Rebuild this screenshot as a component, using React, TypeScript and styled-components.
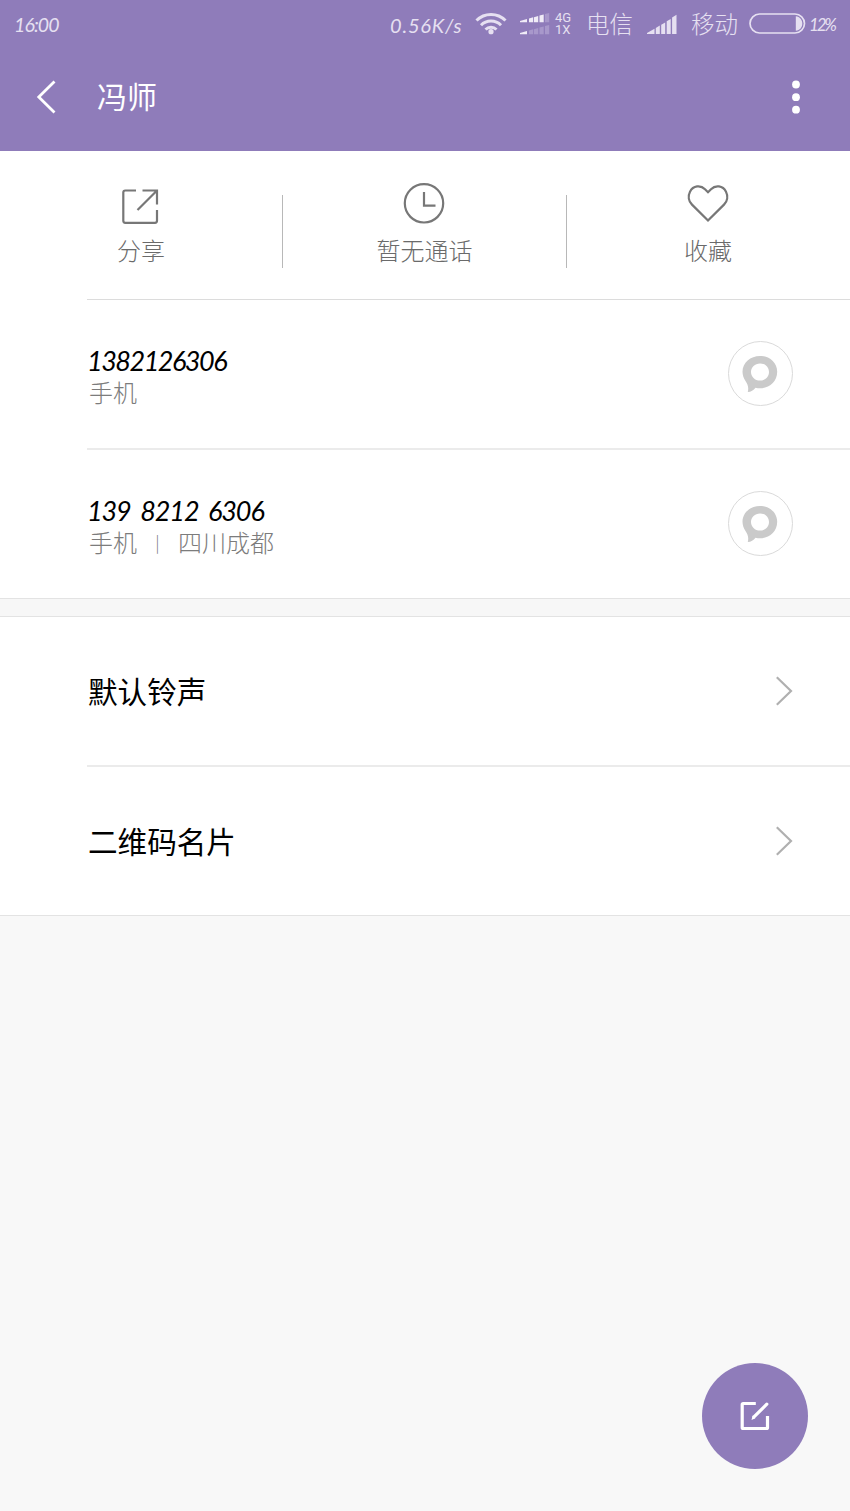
import React from 'react';
import styled, { createGlobalStyle } from 'styled-components';

const PURPLE = '#8f7cba';
const STATUS = '#e6e0f1';

const GlobalStyle = createGlobalStyle`
  * { box-sizing: border-box; }
  body {
    margin: 0;
    background: #f8f8f8;
    font-family: Lato, "Noto Sans CJK SC", sans-serif;
  }
  svg { display: block; flex: none; }
`;

const Screen = styled.div`
  position: relative;
  width: 850px;
  height: 1511px;
  overflow: hidden;
  background: #f8f8f8;
`;

const Header = styled.header`
  height: 151px;
  background: ${PURPLE};
`;

const StatusBar = styled.div`
  display: flex;
  align-items: center;
  height: 48px;
  padding: 0 0 0 14px;
  color: ${STATUS};
`;

const StatusText = styled.span<{ $w: number; $size?: number; $spacing?: number; $ml?: number }>`
  flex: none;
  width: ${(p) => p.$w}px;
  margin-left: ${(p) => p.$ml ?? 0}px;
  font-size: ${(p) => p.$size ?? 20}px;
  letter-spacing: ${(p) => p.$spacing ?? 0}px;
  font-style: italic;
  line-height: 24px;
  padding-top: 2px;
  white-space: nowrap;
`;

const Carrier = styled.span<{ $ml: number }>`
  flex: none;
  width: 47px;
  margin-left: ${(p) => p.$ml}px;
  font-family: "Noto Sans CJK SC", sans-serif;
  font-size: 23.5px;
  font-weight: 300;
  line-height: 30px;
  padding-bottom: 2px;
  white-space: nowrap;
`;

const StatusIcon = styled.svg<{ $ml: number }>`
  margin-left: ${(p) => p.$ml}px;
`;

const NetType = styled.span`
  display: flex;
  flex-direction: column;
  flex: none;
  width: 18px;
  margin-left: 5px;
  font-family: Roboto, sans-serif;
  font-size: 13px;
  line-height: 12px;
`;

const TitleBar = styled.div`
  display: flex;
  align-items: center;
  height: 98px;
  padding: 0 48px 0 36px;
`;

const Title = styled.h1`
  flex: 1;
  margin: 0 0 0 41px;
  padding-bottom: 4px;
  color: #fff;
  font-family: "Noto Sans CJK SC", sans-serif;
  font-size: 30px;
  font-weight: 400;
  line-height: 40px;
`;

const Card = styled.section`
  background: #fff;
  border-bottom: 1px solid #e3e3e3;
`;

const Actions = styled.div`
  display: flex;
  height: 149px;
  position: relative;

  &::after {
    content: '';
    position: absolute;
    right: 0;
    bottom: 0;
    left: 87px;
    height: 1px;
    background: #dcdcdc;
  }
`;

const Action = styled.div<{ $w: number }>`
  display: flex;
  flex: none;
  flex-direction: column;
  align-items: center;
  width: ${(p) => p.$w}px;
  padding-top: 30px;
  color: #6a6a6a;

  svg { margin-right: 1px; }
`;

const ActionLabel = styled.span`
  margin-top: 9px;
  font-family: "Noto Sans CJK SC", sans-serif;
  font-size: 24px;
  font-weight: 300;
  line-height: 32px;
`;

const Divider = styled.div`
  width: 1px;
  height: 73px;
  margin-top: 44px;
  background: #b8b8b8;
`;

const Row = styled.div<{ $line?: boolean; $h: number }>`
  display: flex;
  align-items: center;
  justify-content: space-between;
  height: ${(p) => p.$h}px;
  margin-left: 87px;
  padding-right: 57px;
  border-bottom: ${(p) => (p.$line ? '2px solid #ebebeb' : 'none')};
`;

const Entry = styled.div`
  display: flex;
  flex-direction: column;
  padding-top: 4px;
`;

const Phone = styled.span<{ $grouped?: boolean }>`
  color: #000;
  font-size: 27px;
  font-style: italic;
  letter-spacing: ${(p) => (p.$grouped ? -1.1 : -1.5)}px;
  line-height: 32px;
  word-spacing: ${(p) => (p.$grouped ? 4.3 : 0)}px;
`;

const Detail = styled.span`
  display: flex;
  margin-left: 2px;
  color: #7c7c7c;
  font-family: "Noto Sans CJK SC", sans-serif;
  font-size: 24px;
  font-weight: 300;
  line-height: 30px;
`;

const Bar = styled.span`
  width: 41px;
  font-size: 17px;
  text-align: center;
`;

const Message = styled.div`
  display: flex;
  align-items: center;
  justify-content: center;
  width: 65px;
  height: 65px;
  margin-bottom: 1px;
  border: 1px solid #dadada;
  border-radius: 50%;

  svg { margin-right: 1px; }
`;

const Setting = styled.span`
  margin-left: 1px;
  color: #000;
  font-family: "Noto Sans CJK SC", sans-serif;
  font-size: 29.6px;
  line-height: 40px;
`;

const Gap = styled.div`
  height: 18px;
  border-bottom: 1px solid #e3e3e3;
  background: #f7f7f7;
`;

const EditButton = styled.div`
  position: absolute;
  top: 1363px;
  left: 702px;
  display: flex;
  align-items: center;
  justify-content: center;
  width: 106px;
  height: 106px;
  border-radius: 50%;
  background: ${PURPLE};
`;

const WifiIcon = () => (
  <StatusIcon $ml={13} width="32" height="24" viewBox="0 0 32 24" fill="none" stroke={STATUS} strokeWidth="3">
    <path d="M1.500 8.500a20.500 20.500 0 0 1 29 0M6 13.300a14 14 0 0 1 20 0M10.500 17.500a8 8 0 0 1 11 0" />
    <circle cx="16" cy="19.700" r="2.600" fill={STATUS} stroke="none" />
  </StatusIcon>
);

const barX = [0, 9, 14, 19.5, 25];

const SmallSignal = ({ base, rise, on }: { base: number; rise: number; on: number }) => (
  <>
    {barX.map((x, i) => {
      const w = i === 0 ? 7 : 4.2;
      const top = (px: number) => base - 1.2 - (px / 29) * rise;
      return (
        <path
          key={x}
          fill={i < on ? '#f0ecf7' : '#a898cb'}
          d={`M${x} ${base}V${top(x)}L${x + w} ${top(x + w)}V${base}z`}
        />
      );
    })}
  </>
);

const DualSignal = () => (
  <StatusIcon $ml={13} width="30" height="24" viewBox="0 0 30 24">
    <SmallSignal base={10.2} rise={8} on={4} />
    <SmallSignal base={22.2} rise={8} on={1} />
  </StatusIcon>
);

const FullSignal = () => (
  <StatusIcon $ml={14} width="30" height="20" viewBox="0 0 30 20" fill={STATUS}>
    <path d="M0 20v-1l7.500-4.200v5.200zM8.800 20v-6l4-2.400V20zM14.200 20v-9.200l4-2.400V20zM19.700 20V7.300l4-2.400V20zM25.100 20V3.600L29.500 .8V20z" />
  </StatusIcon>
);

const Battery = () => (
  <StatusIcon $ml={11} width="58" height="22" viewBox="0 0 58 22">
    <rect x="1" y="1" width="54.500" height="19" rx="9.500" fill="none" stroke={STATUS} strokeWidth="1.700" />
    <path d="M46.800 3.200c4 .5 6.500 3.500 6.500 7.300s-2.500 6.800-6.500 7.300z" fill={STATUS} />
  </StatusIcon>
);

const BackIcon = () => (
  <svg width="20" height="34" viewBox="0 0 20 34" fill="none" stroke="#fff" strokeWidth="2.800">
    <path d="M18.500 1.500L2.800 17l15.700 15.500" />
  </svg>
);

const MoreIcon = () => (
  <svg width="12" height="34" viewBox="0 0 12 34" fill="#fff">
    <circle cx="6" cy="4.500" r="3.900" />
    <circle cx="6" cy="17.200" r="3.900" />
    <circle cx="6" cy="29.700" r="3.900" />
  </svg>
);

const ShareIcon = () => (
  <svg width="44" height="44" viewBox="0 0 44 44" fill="none" stroke="#777" strokeWidth="2.200">
    <path d="M17 9.500H6.300a2 2 0 0 0-2 2V39.800a2 2 0 0 0 2 2h29.700a2 2 0 0 0 2-2V29M23.500 9.500h14.500V23.500M37.500 10L18.500 29" />
  </svg>
);

const ClockIcon = () => (
  <svg width="44" height="44" viewBox="0 0 44 44" fill="none" stroke="#777" strokeWidth="2.200">
    <circle cx="22" cy="22.300" r="19.200" />
    <path d="M22 11v13.700h11.500" />
  </svg>
);

const HeartIcon = () => (
  <svg width="44" height="44" viewBox="0 0 44 44" fill="none" stroke="#777" strokeWidth="2.200">
    <path d="M22 39.500L6 23.600C2.500 20.200 1.800 15 4 10.700C7.200 4.500 14.500 3.700 19 8.200L22 11.200L25 8.200C29.500 3.700 36.800 4.500 40 10.700C42.200 15 41.500 20.200 38 23.600Z" />
  </svg>
);

const BubbleIcon = () => (
  <svg width="36" height="38" viewBox="0 0 36 38" fill="#cacaca">
    <path
      fillRule="evenodd"
      d="M18 1C27.500 1 35.200 7.500 35.200 16.800C35.200 26.500 27.500 33.300 18 33.300C16.500 33.300 15 33 13.500 32.700C11.500 35.500 9 36.800 5.800 37C6.800 33 6 29.500 3.500 26C1.500 23 .5 20 .5 16.800C.5 7.500 8.500 1 18 1ZM18 8.400C12.900 8.400 9 12.200 9 17C9 21.800 12.900 25.600 18 25.600C23.100 25.600 27 21.800 27 17C27 12.200 23.100 8.400 18 8.400Z"
    />
  </svg>
);

const ChevronIcon = () => (
  <svg width="18" height="30" viewBox="0 0 18 30" fill="none" stroke="#b0b0b0" strokeWidth="2.200">
    <path d="M1.800 1.300L16 15L1.800 28.700" />
  </svg>
);

const EditIcon = () => (
  <svg width="30" height="30" viewBox="0 0 30 30" fill="none" stroke="#fff" strokeWidth="3.200">
    <path d="M15.800 2.500H3.200a1 1 0 0 0-1 1V26.500a1 1 0 0 0 1 1H26.500a1 1 0 0 0 1-1V15" />
    <path d="M26.800 3.200L14 15.900" strokeLinecap="round" />
    <path d="M12.700 14.500L15.400 17.200L11.500 19z" fill="#fff" stroke="none" />
  </svg>
);

const App = () => (
  <>
    <GlobalStyle />
    <Screen>
      <Header>
        <StatusBar>
          <StatusText $w={376} $spacing={-0.9} $size={19.5}>16:00</StatusText>
          <StatusText $w={72} $spacing={0.8}>0.56K/s</StatusText>
          <WifiIcon />
          <DualSignal />
          <NetType>
            <span>4G</span>
            <span>1X</span>
          </NetType>
          <Carrier $ml={13}>电信</Carrier>
          <FullSignal />
          <Carrier $ml={14}>移动</Carrier>
          <Battery />
          <StatusText $w={30} $ml={2} $size={17} $spacing={-2.2}>12%</StatusText>
        </StatusBar>
        <TitleBar>
          <BackIcon />
          <Title>冯师</Title>
          <MoreIcon />
        </TitleBar>
      </Header>

      <Card>
        <Actions>
          <Action $w={282}>
            <ShareIcon />
            <ActionLabel>分享</ActionLabel>
          </Action>
          <Divider />
          <Action $w={283}>
            <ClockIcon />
            <ActionLabel>暂无通话</ActionLabel>
          </Action>
          <Divider />
          <Action $w={282}>
            <HeartIcon />
            <ActionLabel>收藏</ActionLabel>
          </Action>
        </Actions>
        <Row $h={150} $line>
          <Entry>
            <Phone>1382126306</Phone>
            <Detail>手机</Detail>
          </Entry>
          <Message>
            <BubbleIcon />
          </Message>
        </Row>
        <Row $h={148}>
          <Entry>
            <Phone $grouped>139 8212 6306</Phone>
            <Detail>
              手机<Bar>|</Bar>四川成都
            </Detail>
          </Entry>
          <Message>
            <BubbleIcon />
          </Message>
        </Row>
      </Card>
      <Gap />
      <Card>
        <Row $h={150} $line>
          <Setting>默认铃声</Setting>
          <ChevronIcon />
        </Row>
        <Row $h={148}>
          <Setting>二维码名片</Setting>
          <ChevronIcon />
        </Row>
      </Card>

      <EditButton>
        <EditIcon />
      </EditButton>
    </Screen>
  </>
);

export default App;
